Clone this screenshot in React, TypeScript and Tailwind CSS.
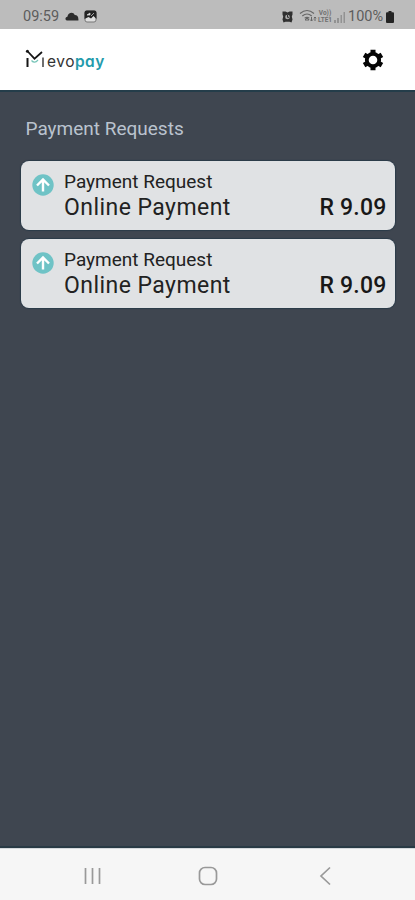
const requests = [
  { id: 1, title: 'Payment Request', description: 'Online Payment', amount: 'R 9.09' },
  { id: 2, title: 'Payment Request', description: 'Online Payment', amount: 'R 9.09' },
];

function StatusBar() {
  return (
    <div className="flex h-[29px] items-center justify-between bg-[#bcbcbc] pt-[4px] pr-[21px] pl-[23px] text-[#5c5c5c]">
      <div className="flex items-center">
        <span className="w-[37px] pt-px text-[14.5px] leading-none whitespace-nowrap">09:59</span>
        <svg className="ml-[5px]" width="14" height="9" viewBox="0 0 14 9" fill="#2b2b2b">
          <path d="M2.800 8.500C-.4 8.500-.1 5 2.400 4.800 3 .2 8.500-.6 9.700 3c2.400-.1 4 1.500 3.700 5.500z" />
        </svg>
        <svg className="ml-[5px]" width="13" height="13" viewBox="0 0 13 13">
          <rect x="1" y="1" width="11" height="11" rx="2" fill="#dedede" stroke="#777" />
          <path d="M.5 2.500Q.5.5 2.500.5h8Q12.500.5 12.500 2.500V9L9.500 6 7 8.500 4.500 7 .5 9z" fill="#242424" />
          <path d="M3 5l3-2v2zM7 6l3-3" fill="#ddd" stroke="#ddd" strokeWidth=".7" />
        </svg>
      </div>
      <div className="flex items-center">
        <svg className="mr-[6px]" width="11" height="12" viewBox="0 0 11 12">
          <path d="M.5.500h3l2 1 2-1h3v3l-.7 2 .7 3-1 3-2-.7H3.500l-2 .7-1-3 .7-3-.7-2z" fill="#303030" />
          <circle cx="5.500" cy="6" r="2.300" fill="#aaa" />
          <path d="M5.500 4v2.300H7" fill="none" stroke="#303030" />
        </svg>
        <svg className="-mt-[2px]" width="18" height="14" viewBox="0 0 18 14" fill="none" stroke="#666" strokeWidth="1.200">
          <path d="M1 4.500Q8-1.500 15 4.500M3.300 7Q8 3 12.700 7M5.700 9.300Q8 7.500 10.300 9.300" />
          <path d="M8 9l2 2H6zM12.500 8v4M11 10.500l1.500 1.500 1.500-1.500M16 12V8M14.800 9.200L16 8l1.200 1.200" strokeWidth="1" />
        </svg>
        <span className="grid w-[16px] justify-items-center gap-px text-[6.5px] font-bold text-[#707070]">
          <span className="h-[6px] leading-[6px]">Vo))</span>
          <span className="h-[6px] leading-[6px]">LTE1</span>
        </span>
        <svg className="ml-[1px]" width="12" height="12" viewBox="0 0 12 12" fill="#929292">
          <path d="M0 9h2v3H0zM3 7h2v5H3zM6.500 4h1.500v8H6.500zM9.500 1H11v11H9.500z" />
        </svg>
        <span className="ml-[2px] w-[38px] pt-px text-[14.5px] leading-none whitespace-nowrap">100%</span>
        <svg width="8" height="12" viewBox="0 0 8 12" fill="#242424">
          <path d="M2.500 0h3v1.200H7Q8 1.200 8 2.500V11Q8 12 7 12H1Q0 12 0 11V2.500Q0 1.200 1 1.200h1.500z" />
        </svg>
      </div>
    </div>
  );
}

function Logo() {
  return (
    <div className="flex items-start pt-[3px]">
      <svg width="20" height="20" viewBox="0 0 20 20" fill="none">
        <path d="M2.500 9V18" stroke="#151515" strokeWidth="2" />
        <path d="M2.300 2L9.500 9.700L17 3" stroke="#151515" strokeWidth="1.700" />
        <circle cx="2.400" cy="2.300" r="1.500" fill="#151515" />
        <path d="M18 8.500V18" stroke="#555" strokeWidth="1.700" />
        <path d="M6.500 11.500Q9.500 15 13 11" stroke="#77c5b8" strokeWidth="1.200" />
      </svg>
      <span className="ml-[2px] pt-px font-['Inter'] text-[15.5px] leading-[24px] tracking-[0.5px] text-[#333] [font-feature-settings:'cv11']">
        evo<span className="font-semibold text-[#239bac]">pay</span>
      </span>
    </div>
  );
}

function SettingsIcon() {
  return (
    <svg width="24" height="24" viewBox="0 0 24 24" fill="none" stroke="#050505">
      <circle cx="12" cy="12" r="6.200" strokeWidth="3.800" />
      <path d="M12 1.700v4M12 18.300v4M3.080 6.850l3.460 2M17.460 15.150l3.460 2M3.080 17.150l3.460-2M17.460 8.850l3.460-2" strokeWidth="5" />
    </svg>
  );
}

function RequestCard({ title, description, amount }: { title: string; description: string; amount: string }) {
  return (
    <div className="flex h-[69px] rounded-[8px] bg-[#e0e2e4] pr-[8px] pl-[11px] shadow-[0_0_1px_1px_#2b3b49]">
      <svg className="mt-[13px] shrink-0" width="22" height="22" viewBox="0 0 22 22">
        <circle cx="11" cy="11" r="10.700" fill="#6fc3c6" />
        <path d="M11 17.500V6M5 11.500L11 5.500l6 6" fill="none" stroke="#fff" strokeWidth="2.400" />
      </svg>
      <div className="ml-[10.5px] flex-1 whitespace-nowrap text-[#222]">
        <p className="mt-[8px] text-[19px] leading-[26px]">{title}</p>
        <p className="text-[23px] leading-[26px] tracking-[0.45px]">{description}</p>
      </div>
      <p className="mt-[34px] text-[23px] leading-[26px] font-medium tracking-[0.2px] whitespace-nowrap text-[#181818]">{amount}</p>
    </div>
  );
}

function NavBar() {
  return (
    <nav className="flex h-[52px] items-center justify-between border-t border-[#d5d9dc] bg-[#f6f6f6] pt-[3px] pr-[83px] pl-[83px]">
      <svg width="19" height="18" viewBox="0 0 19 18" stroke="#999" strokeWidth="1.700">
        <path d="M2.500 1v16M9.500 1v16M16.500 1v16" />
      </svg>
      <svg className="-ml-[5px]" width="20" height="20" viewBox="0 0 20 20" fill="none" stroke="#999" strokeWidth="1.700">
        <rect x="1.500" y="1.500" width="17" height="17" rx="5.500" />
      </svg>
      <svg width="13" height="20" viewBox="0 0 13 20" fill="none" stroke="#999" strokeWidth="1.700">
        <path d="M11 1.500L2 10l9 8.500" />
      </svg>
    </nav>
  );
}

export default function App() {
  return (
    <div className="flex h-screen w-full flex-col bg-[#3f4650] font-['Roboto',sans-serif]">
      <StatusBar />
      <header className="flex h-[61px] items-center justify-between bg-white pr-[30px] pl-[25px]">
        <Logo />
        <SettingsIcon />
      </header>
      <main className="flex-1 border-t-2 border-b-2 border-t-[#243d4a] border-b-[#293a45] px-[20.5px]">
        <h1 className="mt-[24px] pl-[5px] text-[19px] leading-[26px] text-[#bac3ce]">Payment Requests</h1>
        <div className="mt-[19px] grid gap-[9px]">
          {requests.map((request) => (
            <RequestCard key={request.id} title={request.title} description={request.description} amount={request.amount} />
          ))}
        </div>
      </main>
      <NavBar />
    </div>
  );
}
